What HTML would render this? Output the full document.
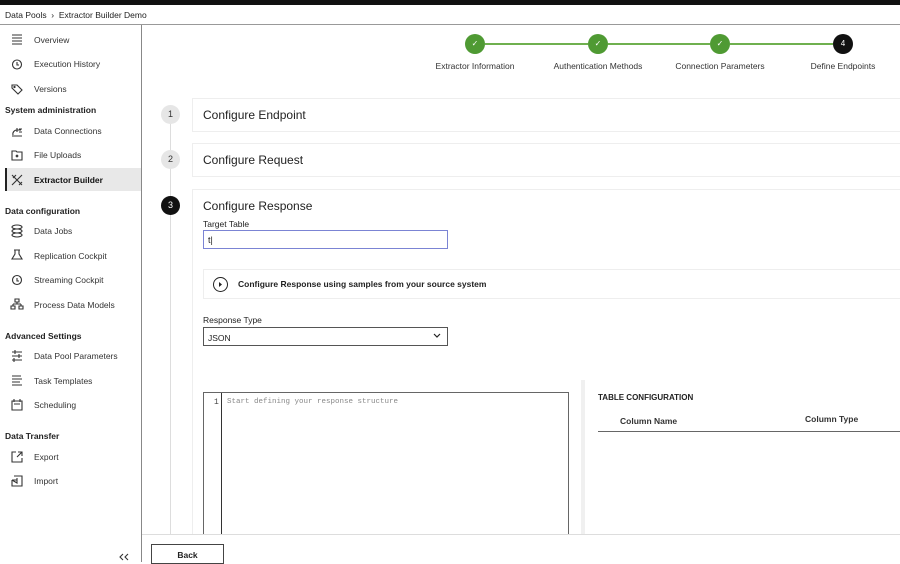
<!DOCTYPE html>
<html><head><meta charset="utf-8"><style>
*{box-sizing:border-box;margin:0;padding:0}
body{width:900px;height:562px;overflow:hidden;background:#fff;font-family:"Liberation Sans",sans-serif;color:#222;position:relative}
.abs{position:absolute}
.top{left:0;top:0;width:900px;height:5px;background:#111}
.bc{left:5px;top:10px;font-size:8.5px;color:#222}
.hline{left:0;top:24px;width:900px;height:1px;background:#999}
.side{left:141px;top:25px;width:1px;height:537px;background:#888}
.it{left:34px;font-size:8.5px;color:#333}
.hd{left:5px;font-size:8.5px;font-weight:bold;color:#222}
.ic{left:11px;width:12px;height:12px}
.sel{left:5px;top:168px;width:136px;height:23px;background:#e8e8e8;border-left:2px solid #222}
.sc{width:20px;height:20px;border-radius:50%;background:#4f9a33;color:#fff;font-size:8px;text-align:center;line-height:20px}
.sl{height:2px;background:#6fb04f;top:43px}
.lab{top:61px;font-size:8.5px;color:#333;text-align:center;width:120px}
.num{left:161px;width:19px;height:19px;border-radius:50%;background:#e6e6e6;font-size:9px;text-align:center;line-height:19px;color:#333}
.card{left:192px;width:720px;border:1px solid #eee;border-right:none}
.ct{left:203px;font-size:12px;color:#222}
</style></head><body>
<div class="abs top"></div>
<div class="abs bc">Data Pools &nbsp;›&nbsp; Extractor Builder Demo</div>
<div class="abs hline"></div>
<div class="abs side"></div>
<div class="abs sel"></div>

<svg class="abs" style="left:0;top:0" width="141" height="562" fill="none" stroke="#333" stroke-width="1.1">
<path d="M12 35h10M12 38h10M12 41h10M12 44h10"/>
<circle cx="17" cy="64.5" r="4.5"/><path d="M17 62v3h2"/>
<path d="M12 85l5 0 5 5-4 4-6-6z"/><circle cx="14.5" cy="87" r=".6"/>
<path d="M13 135a4 4 0 0 1 4-5h4M17 128v4M19 129h3M19 132h3M12 136h10"/>
<path d="M12 151h4l1 1h5v8h-10z"/><circle cx="17" cy="156" r=".8"/>
<path d="M12 175l10 10M22 175l-10 10M13 178l3-3M19 185l3-3"/>
<ellipse cx="17" cy="227" rx="5" ry="2"/><ellipse cx="17" cy="231" rx="5" ry="2"/><ellipse cx="17" cy="235" rx="5" ry="2"/>
<path d="M14 250h6M15 250v4l-3 5h10l-3-5v-4"/>
<circle cx="17" cy="280" r="4.5"/><path d="M17 278v3h2"/>
<path d="M15 299h4v3h-4zM17 302v2M13 304h8M13 304v2M21 304v2M11 306h4v3h-4zM19 306h4v3h-4z"/>
<path d="M12 352h10M12 356h10M12 360h10M15 350v4M19 354v4M14 358v4"/>
<path d="M12 376h9M12 379h10M12 382h8M12 385h10"/>
<path d="M12 401h10v9h-10zM14 399v3M20 399v3M14 404h6"/>
<path d="M16 452h-4v10h10v-4M17 457l5-5M18 452h4v4"/>
<path d="M14 476h8v10h-10v-6M12 480l5 3 0-5M12 480h5"/>
<path d="M123 554l-3 3 3 3M128 554l-3 3 3 3"/>
</svg>
<div class="abs it" style="top:35px">Overview</div>
<div class="abs it" style="top:59px">Execution History</div>
<div class="abs it" style="top:84px">Versions</div>
<div class="abs hd" style="top:105px">System administration</div>
<div class="abs it" style="top:126px">Data Connections</div>
<div class="abs it" style="top:150px">File Uploads</div>
<div class="abs it" style="top:175px;font-weight:bold;color:#111">Extractor Builder</div>
<div class="abs hd" style="top:206px">Data configuration</div>
<div class="abs it" style="top:226px">Data Jobs</div>
<div class="abs it" style="top:251px">Replication Cockpit</div>
<div class="abs it" style="top:275px">Streaming Cockpit</div>
<div class="abs it" style="top:300px">Process Data Models</div>
<div class="abs hd" style="top:331px">Advanced Settings</div>
<div class="abs it" style="top:351px">Data Pool Parameters</div>
<div class="abs it" style="top:376px">Task Templates</div>
<div class="abs it" style="top:400px">Scheduling</div>
<div class="abs hd" style="top:431px">Data Transfer</div>
<div class="abs it" style="top:452px">Export</div>
<div class="abs it" style="top:476px">Import</div>

<!-- stepper -->
<div class="abs sl" style="left:485px;width:103px"></div>
<div class="abs sl" style="left:608px;width:102px"></div>
<div class="abs sl" style="left:730px;width:103px"></div>
<div class="abs sc" style="left:465px;top:34px">✓</div>
<div class="abs sc" style="left:588px;top:34px">✓</div>
<div class="abs sc" style="left:710px;top:34px">✓</div>
<div class="abs sc" style="left:833px;top:34px;background:#111">4</div>
<div class="abs lab" style="left:415px">Extractor Information</div>
<div class="abs lab" style="left:538px">Authentication Methods</div>
<div class="abs lab" style="left:660px">Connection Parameters</div>
<div class="abs lab" style="left:783px">Define Endpoints</div>

<div class="abs" style="left:170px;top:120px;width:1px;height:414px;background:#ddd"></div>
<div class="abs card" style="top:98px;height:34px"></div>
<div class="abs card" style="top:143px;height:34px"></div>
<div class="abs card" style="top:189px;height:360px"></div>
<div class="abs num" style="top:105px">1</div>
<div class="abs num" style="top:150px">2</div>
<div class="abs num" style="top:196px;background:#111;color:#fff">3</div>
<div class="abs ct" style="top:108px">Configure Endpoint</div>
<div class="abs ct" style="top:153px">Configure Request</div>
<div class="abs ct" style="top:199px">Configure Response</div>

<div class="abs" style="left:203px;top:219px;font-size:8.5px">Target Table</div>
<div class="abs" style="left:203px;top:230px;width:245px;height:19px;border:1.5px solid #7b84d4;font-size:9px;padding:4px 4px">t|</div>

<div class="abs" style="left:203px;top:269px;width:700px;height:30px;border:1px solid #eee"></div>
<svg class="abs" style="left:212px;top:276px" width="17" height="17"><circle cx="8.5" cy="8.5" r="7" fill="none" stroke="#222" stroke-width="1"/><path d="M7 6l3 2.5-3 2.5z" fill="#222"/></svg>
<div class="abs" style="left:238px;top:279px;font-size:8.5px;font-weight:bold">Configure Response using samples from your source system</div>

<div class="abs" style="left:203px;top:315px;font-size:8.5px">Response Type</div>
<div class="abs" style="left:203px;top:327px;width:245px;height:19px;border:1px solid #555;font-size:8.5px;padding:5px 4px">JSON</div>
<svg class="abs" style="left:433px;top:333px" width="8" height="6"><path d="M1 1l3 3 3-3" fill="none" stroke="#222" stroke-width="1.2"/></svg>

<div class="abs" style="left:203px;top:392px;width:366px;height:150px;border:1px solid #666"></div>
<div class="abs" style="left:221px;top:393px;width:1px;height:150px;background:#333"></div>
<div class="abs" style="left:214px;top:398px;font-size:8px;font-family:'Liberation Mono',monospace;color:#444">1</div>
<div class="abs" style="left:227px;top:398px;font-size:7.5px;font-family:'Liberation Mono',monospace;color:#888">Start defining your response structure</div>
<div class="abs" style="left:581px;top:380px;width:4px;height:160px;background:#f0f0f0"></div>
<div class="abs" style="left:598px;top:393px;font-size:8px;font-weight:bold">TABLE CONFIGURATION</div>
<div class="abs" style="left:620px;top:416px;font-size:8.5px;font-weight:bold;color:#333">Column Name</div>
<div class="abs" style="left:805px;top:414px;font-size:8.5px;font-weight:bold;color:#333">Column Type</div>
<div class="abs" style="left:598px;top:431px;width:302px;height:1px;background:#666"></div>

<div class="abs" style="left:142px;top:534px;width:758px;height:28px;background:#fff;border-top:1px solid #ddd"></div>
<div class="abs" style="left:151px;top:544px;width:73px;height:20px;border:1px solid #444;font-size:8.5px;font-weight:bold;text-align:center;padding-top:5px">Back</div>
</body></html>
